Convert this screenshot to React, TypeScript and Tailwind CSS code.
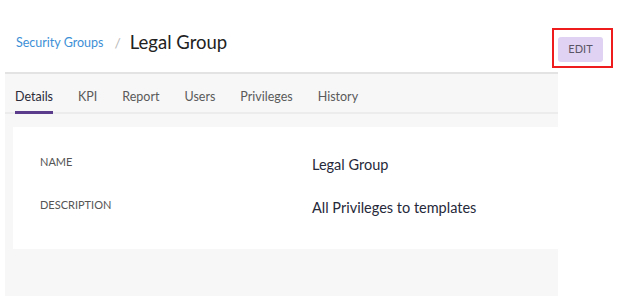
const tabs = ["Details", "KPI", "Report", "Users", "Privileges", "History"];

const rows = [
  { label: "NAME", value: "Legal Group" },
  { label: "DESCRIPTION", value: "All Privileges to templates" },
];

export default function App() {
  return (
    <div
      className="relative h-[296px] w-[624px] overflow-hidden bg-white"
      style={{ fontFamily: "Lato, 'Noto Sans', sans-serif" }}
    >
      <header className="flex h-[72px] items-start">
        <div className="flex items-center pl-[16px] pt-[29px]">
          <a className="text-[12.5px] text-[#3d8fd6]">Security Groups</a>
          <span className="ml-[11px] mr-[9px] text-[14px] text-[#b8b8b8]">/</span>
          <h1 className="text-[18.5px] text-[#222]">Legal Group</h1>
        </div>
        <button
          type="button"
          className="ml-auto mr-[21px] mt-[37px] flex h-[25px] w-[45px] items-center justify-center rounded-[3px] bg-[#e0d2f2] text-[11px] text-[#5a5566]"
        >
          EDIT
        </button>
      </header>

      {/* annotation box around the edit button */}
      <div className="pointer-events-none absolute left-[552px] top-[28px] h-[40px] w-[61px] border-2 border-[#ee1c1c]" />

      <section className="ml-[5px] h-[224px] w-[553px] border-t-2 border-[#e3e3e3] bg-[#f7f7f7]">
        <nav className="flex h-[40px] gap-[25px] border-b-2 border-[#ececec] pl-[10px]">
          {tabs.map((t, i) => (
            <div key={t} className="relative flex items-center pt-[8px]">
              <span className={`text-[12.5px] ${i === 0 ? "text-[#2b2b3a]" : "text-[#5a5a5a]"}`}>{t}</span>
              {i === 0 ? (
                <div className="absolute bottom-[-2px] left-0 h-[3px] w-full bg-[#5b3b8c]" />
              ) : null}
            </div>
          ))}
        </nav>

        <div className="ml-[8px] mt-[13px] h-[122px] bg-white pt-[27px]">
          {rows.map((r) => (
            <div key={r.label} className="flex h-[43px] items-start pl-[27px]">
              <span className="w-[272px] text-[11px] text-[#555]">{r.label}</span>
              <span className="text-[14.5px] text-[#26293a]">{r.value}</span>
            </div>
          ))}
        </div>
      </section>
    </div>
  );
}
